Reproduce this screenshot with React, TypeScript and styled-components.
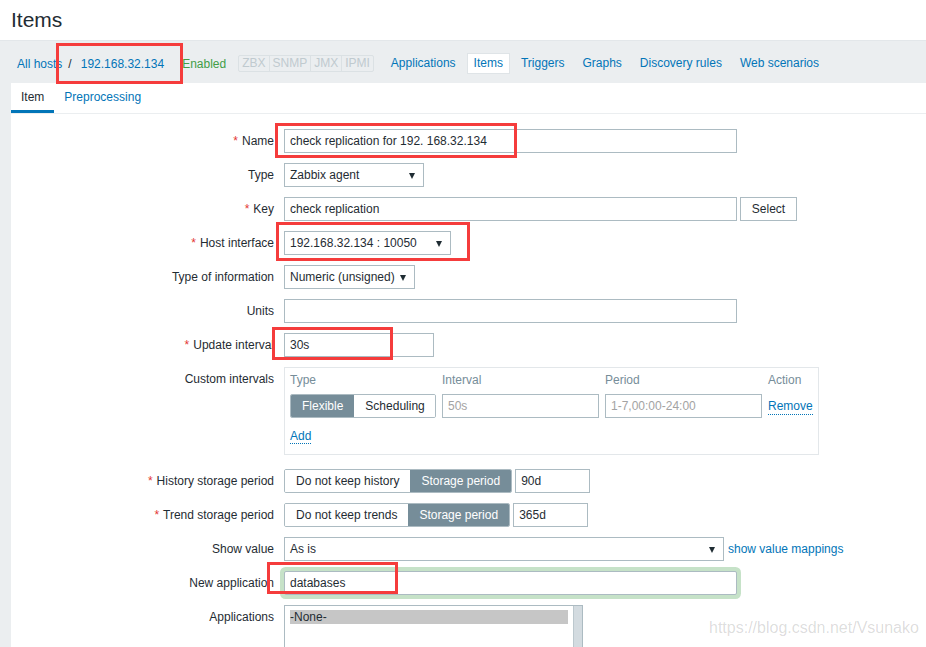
import React from 'react'
import styled, { createGlobalStyle } from 'styled-components'

const GlobalStyle = createGlobalStyle`
  body {
    margin: 0;
    font-family: Arial, "Liberation Sans", sans-serif;
    font-size: 12px;
    color: #1f2c33;
    background: #ebeef0;
  }
  #root {
    width: 926px;
    height: 647px;
    overflow: hidden;
  }
  * { box-sizing: border-box; }
`

const Page = styled.div`
  position: relative;
  width: 926px;
  height: 647px;
  overflow: hidden;
`

const Header = styled.header`
  height: 41px;
  background: #fff;
  border-bottom: 1px solid #e3e7ea;
  padding-left: 11px;
`

const Title = styled.h1`
  margin: 0;
  font-size: 21px;
  font-weight: normal;
  line-height: 39px;
  color: #1f2c33;
`

const NavBar = styled.nav`
  height: 42px;
  display: flex;
  align-items: center;
  padding: 3px 0 0 17px;
`

const Crumb = styled.span`
  color: #0275b8;
`

const Sep = styled.span`
  margin: 0 9px 0 6px;
  color: #1f2c33;
`

const Enabled = styled.span`
  color: #429e47;
  margin-left: 18px;
`

const StatusGroup = styled.div`
  display: flex;
  margin-left: 12px;
  height: 17px;
  border: 1px solid #dbe1e4;
  border-radius: 2px;
`

const StatusItem = styled.span`
  padding: 0 3px;
  line-height: 15px;
  color: #c0cacf;
  & + & {
    border-left: 1px solid #dbe1e4;
  }
`

const NavTabs = styled.div`
  display: flex;
  gap: 4px;
  margin-left: 10px;
`

const NavTab = styled.span<{ $active?: boolean }>`
  padding: 0 6px;
  height: 21px;
  line-height: 19px;
  color: #0275b8;
  border: 1px solid ${p => (p.$active ? '#dfe4e7' : 'transparent')};
  background: ${p => (p.$active ? '#fff' : 'transparent')};
`

const Content = styled.main`
  margin-left: 11px;
  background: #fff;
  min-height: 600px;
`

const TabList = styled.div`
  display: flex;
  height: 31px;
  border-bottom: 1px solid #ebeef0;
`

const Tab = styled.span<{ $active?: boolean }>`
  padding: 1px 10px 0;
  line-height: 27px;
  color: ${p => (p.$active ? '#1f2c33' : '#0275b8')};
  border-bottom: 3px solid ${p => (p.$active ? '#0275b8' : 'transparent')};
`

const Form = styled.div`
  display: grid;
  grid-template-columns: 263px 1fr;
  column-gap: 10px;
  row-gap: 10px;
  padding-top: 15px;
`

const Label = styled.div<{ $required?: boolean }>`
  text-align: right;
  line-height: 24px;
  white-space: nowrap;
  &::before {
    content: ${p => (p.$required ? "'*'" : 'none')};
    color: #e33734;
    margin-right: 4px;
  }
`

const Field = styled.div`
  display: flex;
  align-items: center;
  min-height: 24px;
`

const TextInput = styled.input<{ $width: number; $glow?: boolean }>`
  width: ${p => p.$width}px;
  height: 24px;
  padding: 0 5px;
  border: 1px solid #acbbc2;
  font: inherit;
  color: #1f2c33;
  background: #fff;
  outline: none;
  margin: 0;
  box-shadow: ${p => (p.$glow ? '0 0 0 4px #c6e2c8' : 'none')};
  border-radius: ${p => (p.$glow ? '2px' : '0')};
  &::placeholder {
    color: #a3a3a3;
  }
`

const SideInput = styled(TextInput)`
  margin-left: 3px;
`

const SelectBox = styled.div<{ $width: number }>`
  position: relative;
  width: ${p => p.$width}px;
  height: 24px;
  padding: 0 24px 0 5px;
  line-height: 22px;
  border: 1px solid #acbbc2;
  background: #fff;
  white-space: nowrap;
  &::after {
    content: '';
    position: absolute;
    right: 8px;
    top: 9px;
    border-left: 3.5px solid transparent;
    border-right: 3.5px solid transparent;
    border-top: 6px solid #1f2c33;
  }
`

const Button = styled.button`
  margin: 0 0 0 3px;
  width: 57px;
  height: 24px;
  border: 1px solid #acbbc2;
  background: #fff;
  font: inherit;
  color: #1f2c33;
  padding: 0;
`

const Link = styled.span<{ $dotted?: boolean }>`
  color: #0275b8;
  line-height: 16px;
  border-bottom: 1px dotted ${p => (p.$dotted ? '#0275b8' : 'transparent')};
`

const SideLink = styled(Link)`
  margin-left: 4px;
`

const IntervalsBox = styled.div`
  width: 535px;
  padding: 5px;
  border: 1px solid #e3e7ea;
  margin-bottom: 4px;
`

const IntervalsGrid = styled.div`
  display: grid;
  grid-template-columns: 146px 157px 157px auto;
  column-gap: 6px;
`

const ColHead = styled.div`
  color: #768d99;
  line-height: 15px;
  height: 21px;
`

const Segments = styled.div`
  display: flex;
  height: 24px;
  border: 1px solid #acbbc2;
  border-radius: 2px;
  overflow: hidden;
`

const Segment = styled.span<{ $checked?: boolean }>`
  padding: 0 11px;
  line-height: 22px;
  white-space: nowrap;
  color: ${p => (p.$checked ? '#fff' : '#1f2c33')};
  background: ${p => (p.$checked ? '#768d99' : '#fff')};
`

const RemoveCell = styled.div`
  display: flex;
  align-items: center;
`

const AddRow = styled.div`
  margin-top: 9px;
  padding-bottom: 4px;
  line-height: 18px;
`

const ListBox = styled.div`
  position: relative;
  width: 299px;
  height: 150px;
  border: 1px solid #acbbc2;
  padding: 4px 14px 0 5px;
`

const ListOption = styled.div<{ $selected?: boolean }>`
  line-height: 14px;
  background: ${p => (p.$selected ? '#c6c6c6' : 'transparent')};
  color: #1f2c33;
`

const ScrollTrack = styled.div`
  position: absolute;
  top: 0;
  right: 0;
  bottom: 0;
  width: 9px;
  background: #d3dbe0;
  border-left: 1px solid #bcc8ce;
`

const Mark = styled.div<{ $x: number; $y: number; $w: number; $h: number }>`
  position: absolute;
  left: ${p => p.$x}px;
  top: ${p => p.$y}px;
  width: ${p => p.$w}px;
  height: ${p => p.$h}px;
  border: 3px solid #f53c3c;
  pointer-events: none;
`

const Watermark = styled.div`
  position: absolute;
  left: 709px;
  top: 619px;
  font-size: 16px;
  color: rgba(0, 0, 0, 0.15);
  white-space: nowrap;
`

const marks = [
  { x: 56, y: 43, w: 127, h: 41 },
  { x: 275, y: 123, w: 242, h: 35 },
  { x: 276, y: 222, w: 194, h: 39 },
  { x: 272, y: 327, w: 121, h: 33 },
  { x: 267, y: 562, w: 131, h: 32 },
]

const navTabs = ['Applications', 'Items', 'Triggers', 'Graphs', 'Discovery rules', 'Web scenarios']

export default function App() {
  return (
    <Page>
      <GlobalStyle />
      <Header>
        <Title>Items</Title>
      </Header>
      <NavBar>
        <Crumb>All hosts</Crumb>
        <Sep>/</Sep>
        <Crumb>192.168.32.134</Crumb>
        <Enabled>Enabled</Enabled>
        <StatusGroup>
          {['ZBX', 'SNMP', 'JMX', 'IPMI'].map(s => (
            <StatusItem key={s}>{s}</StatusItem>
          ))}
        </StatusGroup>
        <NavTabs>
          {navTabs.map(t => (
            <NavTab key={t} $active={t === 'Items'}>{t}</NavTab>
          ))}
        </NavTabs>
      </NavBar>
      <Content>
        <TabList>
          <Tab $active>Item</Tab>
          <Tab>Preprocessing</Tab>
        </TabList>
        <Form>
          <Label $required>Name</Label>
          <Field>
            <TextInput $width={453} defaultValue="check replication for 192. 168.32.134" />
          </Field>

          <Label>Type</Label>
          <Field>
            <SelectBox $width={140}>Zabbix agent</SelectBox>
          </Field>

          <Label $required>Key</Label>
          <Field>
            <TextInput $width={453} defaultValue="check replication" />
            <Button>Select</Button>
          </Field>

          <Label $required>Host interface</Label>
          <Field>
            <SelectBox $width={167}>192.168.32.134 : 10050</SelectBox>
          </Field>

          <Label>Type of information</Label>
          <Field>
            <SelectBox $width={131}>Numeric (unsigned)</SelectBox>
          </Field>

          <Label>Units</Label>
          <Field>
            <TextInput $width={453} defaultValue="" />
          </Field>

          <Label $required>Update interval</Label>
          <Field>
            <TextInput $width={150} defaultValue="30s" />
          </Field>

          <Label>Custom intervals</Label>
          <div>
            <IntervalsBox>
              <IntervalsGrid>
                <ColHead>Type</ColHead>
                <ColHead>Interval</ColHead>
                <ColHead>Period</ColHead>
                <ColHead>Action</ColHead>
                <Segments>
                  <Segment $checked>Flexible</Segment>
                  <Segment>Scheduling</Segment>
                </Segments>
                <TextInput $width={157} placeholder="50s" />
                <TextInput $width={157} placeholder="1-7,00:00-24:00" />
                <RemoveCell>
                  <Link $dotted>Remove</Link>
                </RemoveCell>
              </IntervalsGrid>
              <AddRow>
                <Link $dotted>Add</Link>
              </AddRow>
            </IntervalsBox>
          </div>

          <Label $required>History storage period</Label>
          <Field>
            <Segments>
              <Segment>Do not keep history</Segment>
              <Segment $checked>Storage period</Segment>
            </Segments>
            <SideInput $width={75} defaultValue="90d" />
          </Field>

          <Label $required>Trend storage period</Label>
          <Field>
            <Segments>
              <Segment>Do not keep trends</Segment>
              <Segment $checked>Storage period</Segment>
            </Segments>
            <SideInput $width={75} defaultValue="365d" />
          </Field>

          <Label>Show value</Label>
          <Field>
            <SelectBox $width={440}>As is</SelectBox>
            <SideLink>show value mappings</SideLink>
          </Field>

          <Label>New application</Label>
          <Field>
            <TextInput $width={453} $glow defaultValue="databases" />
          </Field>

          <Label>Applications</Label>
          <Field>
            <ListBox>
              <ListOption $selected>-None-</ListOption>
              <ScrollTrack />
            </ListBox>
          </Field>
        </Form>
      </Content>
      {marks.map((m, i) => (
        <Mark key={i} $x={m.x} $y={m.y} $w={m.w} $h={m.h} />
      ))}
      <Watermark>https://blog.csdn.net/Vsunako</Watermark>
    </Page>
  )
}
